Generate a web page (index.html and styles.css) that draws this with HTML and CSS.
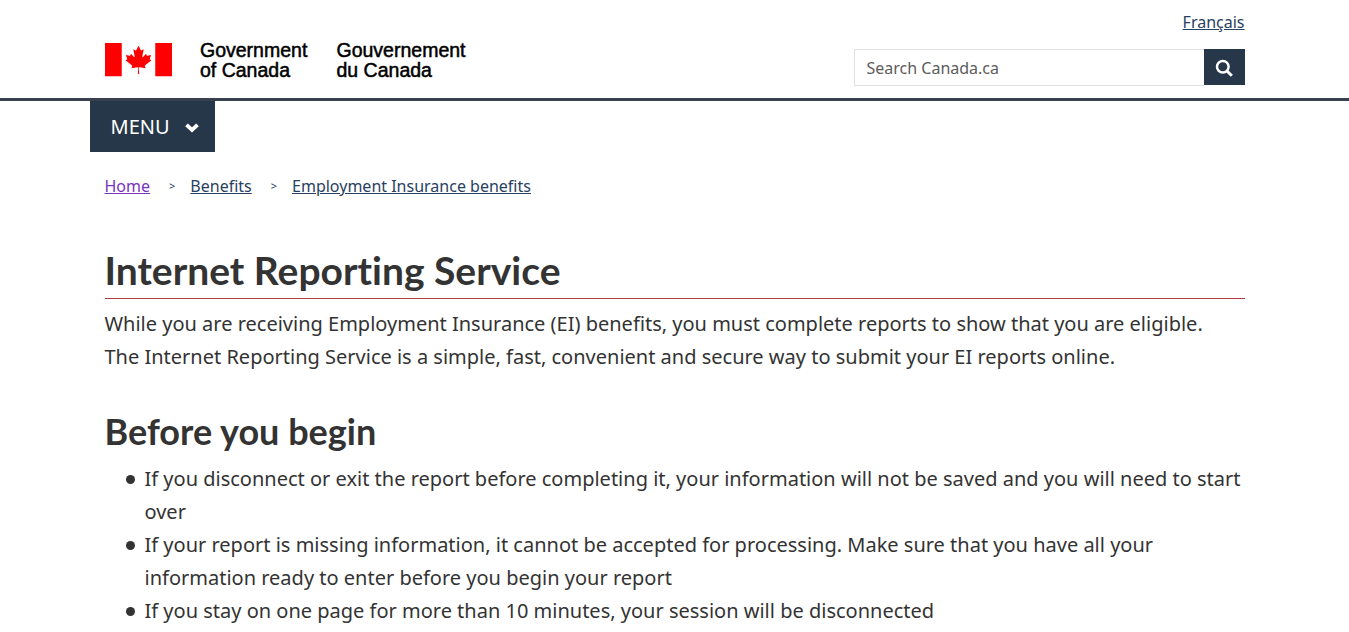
FILE: index.html
```html
<!DOCTYPE html>
<html lang="en">
<head>
<meta charset="utf-8">
<title>Internet Reporting Service</title>
<link rel="stylesheet" href="styles.css">
</head>
<body>
<header>
  <div class="container banner">
    <svg class="signature" viewBox="0 -16 724 100" role="img" aria-label="Government of Canada / Gouvernement du Canada">
      <svg width="134" height="67" viewBox="0 0 9600 4800">
        <path fill="#f00" d="M0 0h2400v4800H0zM7200 0h2400v4800H7200zM4890 4430l-45-863a95 95 0 0 1 111-98l859 151-116-320a65 65 0 0 1 20-73l941-762-212-99a65 65 0 0 1-34-79l186-572-542 115a65 65 0 0 1-73-38l-105-247-423 454a65 65 0 0 1-111-57l204-1052-327 189a65 65 0 0 1-91-27l-332-652-332 652a65 65 0 0 1-91 27l-327-189 204 1052a65 65 0 0 1-111 57l-423-454-105 247a65 65 0 0 1-73 38l-542-115 186 572a65 65 0 0 1-34 79l-212 99 941 762a65 65 0 0 1 20 73l-116 320 859-151a95 95 0 0 1 111 98l-45 863z"/>
      </svg>
      <g class="signature-text">
        <text x="190" y="28">Government</text>
        <text x="190" y="67">of Canada</text>
        <text x="463" y="28">Gouvernement</text>
        <text x="463" y="67">du Canada</text>
      </g>
    </svg>
    <div class="tools">
      <a class="language" href="#fr" lang="fr">Français</a>
      <form class="search" role="search">
        <input class="search-input" type="search" placeholder="Search Canada.ca" aria-label="Search Canada.ca">
        <button class="search-button" type="submit" aria-label="Search">
          <svg class="search-icon" viewBox="0 0 18 18" aria-hidden="true"><circle cx="7.8" cy="7.8" r="5.8" fill="none" stroke="#fff" stroke-width="2.5"/><path d="M12 12l4.8 4.8" stroke="#fff" stroke-width="3"/></svg>
        </button>
      </form>
    </div>
  </div>
  <nav class="menu-bar" aria-label="Menu">
    <div class="menu-container">
      <button class="menu-button" type="button">MENU
        <svg class="chevron" viewBox="0 0 14 10" aria-hidden="true"><path d="M1.5 1.8L7 7l5.5-5.2" fill="none" stroke="#fff" stroke-width="3.8"/></svg>
      </button>
    </div>
  </nav>
  <nav class="container" aria-label="Breadcrumb">
    <ol class="breadcrumb">
      <li><a class="visited" href="#home">Home</a></li>
      <li><a href="#benefits">Benefits</a></li>
      <li><a href="#ei">Employment Insurance benefits</a></li>
    </ol>
  </nav>
</header>
<main class="container">
  <h1>Internet Reporting Service</h1>
  <p>While you are receiving Employment Insurance (EI) benefits, you must complete reports to show that you are eligible. The Internet Reporting Service is a simple, fast, convenient and secure way to submit your EI reports online.</p>
  <h2>Before you begin</h2>
  <ul class="notes">
    <li>If you disconnect or exit the report before completing it, your information will not be saved and you will need to start over</li>
    <li>If your report is missing information, it cannot be accepted for processing. Make sure that you have all your information ready to enter before you begin your report</li>
    <li>If you stay on one page for more than 10 minutes, your session will be disconnected</li>
  </ul>
</main>
</body>
</html>
```
FILE: styles.css
```css
* { box-sizing: border-box; }
body {
  margin: 0;
  background: #fff;
  color: #333;
  font: 20px/33px "Noto Sans", sans-serif;
}
a { color: #284162; }
.container, .menu-container {
  max-width: 1170px;
  margin: 0 auto;
}
.container { padding: 0 15px; }
.banner {
  display: flex;
  align-items: flex-start;
  justify-content: space-between;
  padding-top: 10px;
  padding-bottom: 12px;
}
.signature {
  width: 362px;
  height: 50px;
  margin-top: 25px;
  overflow: visible;
}
.signature-text {
  fill: #000;
  stroke: #000;
  stroke-width: 1px;
  font: 39px "Liberation Sans", Arial, sans-serif;
}
.tools {
  display: flex;
  flex-direction: column;
  align-items: flex-end;
  gap: 15px;
}
.language { font-size: 16px; line-height: 24px; }
.search { display: flex; align-items: flex-start; }
.search-input {
  width: 350px;
  height: 37px;
  padding: 0 12px;
  border: 1px solid #e0e0e0;
  border-right: 0;
  border-radius: 0;
  background: #fff;
  color: #333;
  font: 16px/24px "Noto Sans", sans-serif;
  appearance: none;
}
.search-input::placeholder { color: #5c5c5c; }
.search-button {
  display: flex;
  align-items: center;
  justify-content: center;
  width: 41px;
  height: 36px;
  padding: 0;
  border: 0;
  background: #26374a;
}
.search-icon { width: 18px; height: 18px; margin-top: 2px; }
.menu-bar { border-top: 3px solid #38414d; }
.menu-button {
  display: flex;
  align-items: center;
  gap: 15px;
  height: 51px;
  padding: 0 16px 0 21px;
  border: 0;
  background: #26374a;
  color: #fff;
  font: 20px/33px "Noto Sans", sans-serif;
}
.chevron { width: 14px; height: 10px; margin-top: 2px; }
.breadcrumb {
  display: flex;
  flex-wrap: wrap;
  margin: 0;
  padding: 22px 0 0;
  list-style: none;
  font-size: 16px;
  line-height: 24px;
}
.breadcrumb li { display: flex; align-items: center; }
.breadcrumb li + li::before {
  content: ">";
  padding: 0 15px 0 19px;
  color: #284162;
  font-size: 11px;
}
.breadcrumb .visited { color: #7834bc; }
h1, h2 {
  font-family: Lato, sans-serif;
  font-weight: 700;
  font-variant-ligatures: none;
}
h1 {
  margin: 49px 0 8px;
  padding-bottom: 5px;
  border-bottom: 1px solid #af3c43;
  font-size: 39px;
  line-height: 46px;
}
p { max-width: 1120px; margin: 0; }
h2 { margin: 37px 0 10px; font-size: 36px; line-height: 42px; }
.notes { margin: 0; padding-left: 21px; list-style: none; }
.notes li { display: flex; gap: 10px; }
.notes li::before {
  content: "";
  flex: none;
  width: 9px;
  height: 9px;
  margin-top: 13px;
  border-radius: 50%;
  background: #333;
}
```
